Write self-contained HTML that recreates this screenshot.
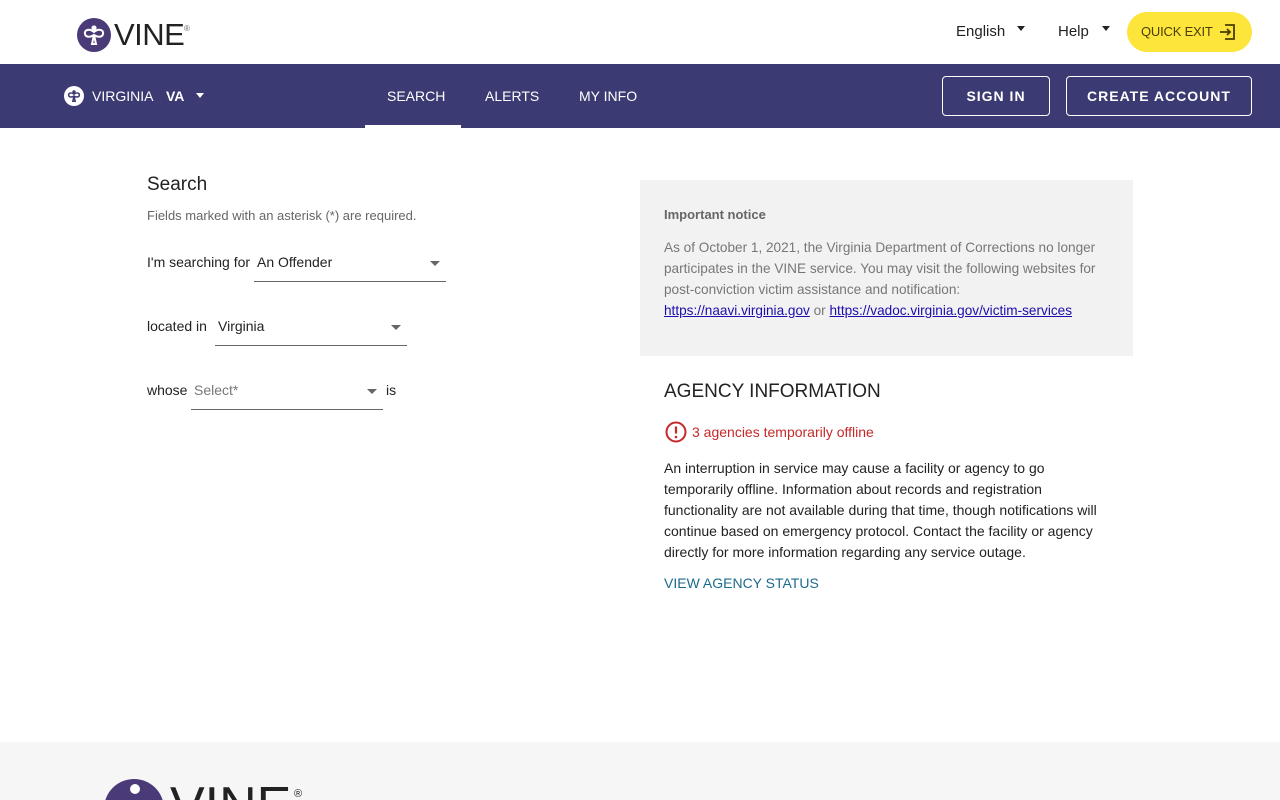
<!DOCTYPE html>
<html style="overflow:hidden;width:1280px;height:800px"><head><meta charset="utf-8"><style>
*{box-sizing:border-box;margin:0;padding:0}
body{width:1280px;height:800px;overflow:hidden;font-family:"Liberation Sans",sans-serif;background:#fff;color:#222;position:relative}
.abs{position:absolute;white-space:nowrap}
.top{height:64px;background:#fff}
.nav{position:absolute;top:64px;left:0;width:1280px;height:64px;background:#3c3a72}
.navt{color:#fff;font-size:14px}
.btn{position:absolute;border:1px solid #fff;border-radius:4px;color:#fff;font-weight:bold;font-size:14px;letter-spacing:1px;text-align:center;line-height:38px;height:40px}
.lbl{font-size:14px;color:#222}
.sel{position:absolute;border-bottom:1px solid #666;height:30px;font-size:14px}
.tri{position:absolute;width:0;height:0;border-left:5px solid transparent;border-right:5px solid transparent;border-top:5px solid #666}
a{color:#1a0dab;text-decoration:underline}
</style></head><body>
<div class="top"></div>
<svg class="abs" style="left:77px;top:18px" width="34" height="34" viewBox="0 0 34 34"><circle cx="17" cy="17" r="17" fill="#4a3a78"/><circle cx="17" cy="10" r="2.6" fill="#fff"/><path d="M17 14 C12 10 7 12 8 16 C9 20 14 19 17 17 C20 19 25 20 26 16 C27 12 22 10 17 14Z M17 17 L15 26 L19 26 Z" fill="none" stroke="#fff" stroke-width="2"/></svg>
<div class="abs" style="left:114px;top:17px;font-size:31px;color:#222;letter-spacing:-0.5px">VINE</div>
<div class="abs" style="left:184px;top:24px;font-size:8px;color:#666">®</div>
<div class="abs" style="left:956px;top:23px;font-size:15px">English</div>
<div class="tri" style="left:1017px;top:26px;border-top-color:#222;border-left-width:4px;border-right-width:4px"></div>
<div class="abs" style="left:1058px;top:23px;font-size:15px">Help</div>
<div class="tri" style="left:1102px;top:26px;border-top-color:#222;border-left-width:4px;border-right-width:4px"></div>
<div class="abs" style="left:1127px;top:12px;width:125px;height:40px;border-radius:20px;background:#fde53b"></div>
<div class="abs" style="left:1141px;top:24px;font-size:13px;color:#4a3e00;letter-spacing:-0.2px">QUICK EXIT</div>
<svg class="abs" style="left:1219px;top:23px" width="18" height="18" viewBox="0 0 18 18"><path d="M6 2H15V16H6 M1 9H11 M8 6L11 9L8 12" fill="none" stroke="#4a3e00" stroke-width="1.8"/></svg>
<div class="nav">
<svg class="abs" style="left:64px;top:22px" width="20" height="20" viewBox="0 0 34 34"><circle cx="17" cy="17" r="17" fill="#fff"/><circle cx="17" cy="10" r="2.8" fill="#3c3a72"/><path d="M17 14 C12 10 7 12 8 16 C9 20 14 19 17 17 C20 19 25 20 26 16 C27 12 22 10 17 14Z M17 17 L15 26 L19 26 Z" fill="none" stroke="#3c3a72" stroke-width="2.5"/></svg>
<div class="abs navt" style="left:92px;top:24px">VIRGINIA</div>
<div class="abs navt" style="left:166px;top:24px;font-weight:bold">VA</div>
<div class="tri" style="left:196px;top:29px;border-top-color:#fff;border-left-width:4px;border-right-width:4px"></div>
<div class="abs navt" style="left:387px;top:24px">SEARCH</div>
<div class="abs" style="left:365px;top:61px;width:96px;height:3px;background:#fff"></div>
<div class="abs navt" style="left:485px;top:24px">ALERTS</div>
<div class="abs navt" style="left:579px;top:24px">MY INFO</div>
<div class="btn" style="left:942px;top:12px;width:108px">SIGN IN</div>
<div class="btn" style="left:1066px;top:12px;width:186px">CREATE ACCOUNT</div>
</div>
<div class="abs" style="left:147px;top:174px;font-size:19px">Search</div>
<div class="abs" style="left:147px;top:208px;font-size:13px;color:#666">Fields marked with an asterisk (*) are required.</div>
<div class="abs lbl" style="left:147px;top:254px">I'm searching for</div>
<div class="sel" style="left:254px;top:252px;width:192px;padding-left:3px;line-height:20px">An Offender</div>
<div class="tri" style="left:430px;top:261px"></div>
<div class="abs lbl" style="left:147px;top:318px">located in</div>
<div class="sel" style="left:215px;top:316px;width:192px;padding-left:3px;line-height:20px">Virginia</div>
<div class="tri" style="left:391px;top:325px"></div>
<div class="abs lbl" style="left:147px;top:382px">whose</div>
<div class="sel" style="left:191px;top:380px;width:192px;padding-left:3px;line-height:20px;color:#777">Select*</div>
<div class="tri" style="left:367px;top:389px"></div>
<div class="abs lbl" style="left:386px;top:382px">is</div>
<div class="abs" style="left:640px;top:180px;width:493px;height:176px;background:#f2f2f2"></div>
<div class="abs" style="left:664px;top:207px;font-size:13px;font-weight:bold;color:#666">Important notice</div>
<div class="abs" style="left:664px;top:237px;font-size:13.6px;color:#777;line-height:21px;white-space:normal;width:436px">As of October 1, 2021, the Virginia Department of Corrections no longer participates in the VINE service. You may visit the following websites for post-conviction victim assistance and notification:<br><a>https://naavi.virginia.gov</a> or <a>https://vadoc.virginia.gov/victim-services</a></div>
<div class="abs" style="left:664px;top:381px;font-size:19px;color:#222">AGENCY INFORMATION</div>
<svg class="abs" style="left:665px;top:421px" width="22" height="22" viewBox="0 0 22 22"><circle cx="11" cy="11" r="9.5" fill="none" stroke="#c62828" stroke-width="2"/><path d="M11 5.5V12.5" stroke="#c62828" stroke-width="2.2"/><circle cx="11" cy="16" r="1.3" fill="#c62828"/></svg>
<div class="abs" style="left:692px;top:424px;font-size:14px;color:#c62828">3 agencies temporarily offline</div>
<div class="abs" style="left:664px;top:458px;font-size:14px;line-height:21px;white-space:normal;width:450px;color:#222">An interruption in service may cause a facility or agency to go temporarily offline. Information about records and registration functionality are not available during that time, though notifications will continue based on emergency protocol. Contact the facility or agency directly for more information regarding any service outage.</div>
<div class="abs" style="left:664px;top:575px;font-size:14px;color:#1c6b8c">VIEW AGENCY STATUS</div>
<div class="abs" style="left:0;top:742px;width:1280px;height:58px;background:#f6f6f6;overflow:hidden">
<div class="abs" style="left:104px;top:37px;width:60px;height:60px;border-radius:50%;background:#4a3a78"></div>
<div class="abs" style="left:130px;top:42px;width:10px;height:10px;border-radius:50%;background:#fff"></div>
<div class="abs" style="left:170px;top:34px;font-size:52px;color:#222;line-height:60px">VINE</div>
<div class="abs" style="left:294px;top:46px;font-size:11px;color:#222">®</div>
</div>
</body></html>
